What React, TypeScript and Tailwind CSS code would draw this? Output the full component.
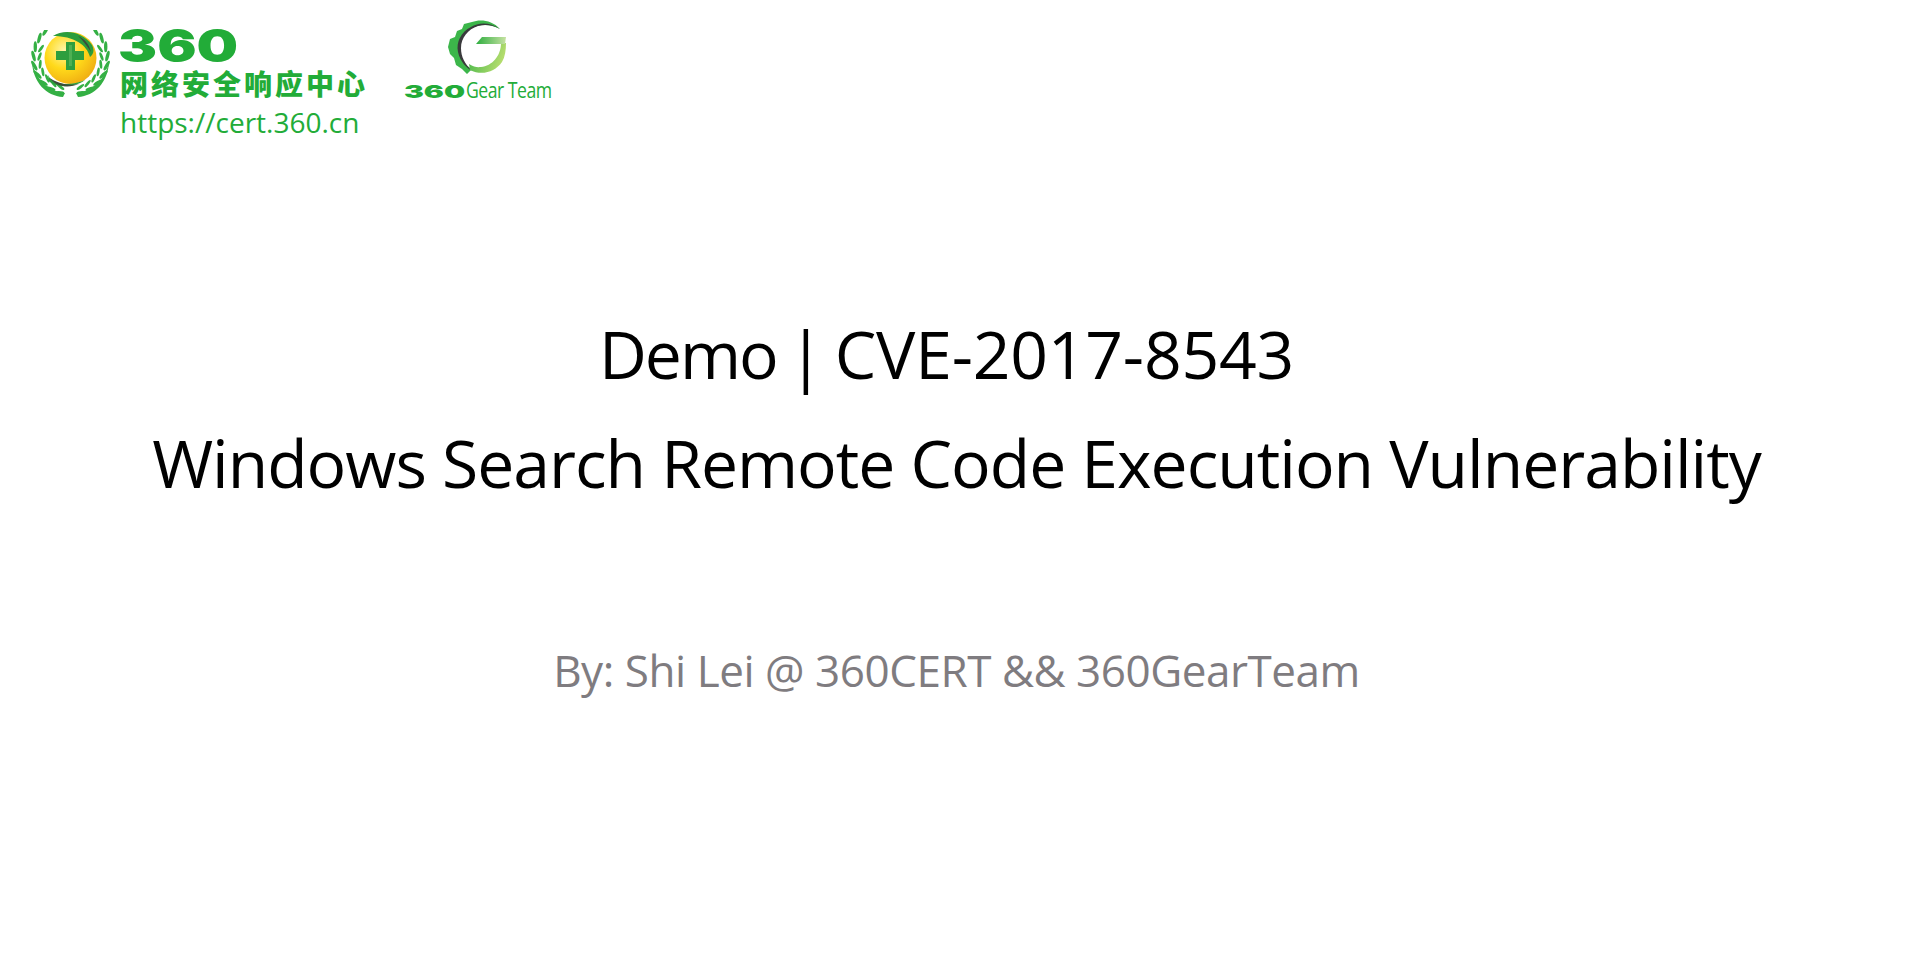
const OUTER = [0, 1, 2, 3, 4, 5, 6, 7, 8];

function CertEmblem() {
  return (
    <svg width="82" height="68" viewBox="0 0 82 68" className="shrink-0">
      <defs>
        <radialGradient id="ball" cx="0.38" cy="0.35" r="0.8">
          <stop offset="0" stopColor="#fff6a8" />
          <stop offset="0.45" stopColor="#ffd91a" />
          <stop offset="1" stopColor="#eba00f" />
        </radialGradient>
      </defs>
      {[false, true].map((flip) => (
        <g key={String(flip)} transform={flip ? "translate(81 0) scale(-1 1)" : undefined} fill="#34b044">
          <path d="M33 67 C16 66 3 52 2 32 C6 50 18 61 35 63Z" />
          {OUTER.map((i) => {
            const deg = 228 - i * 15;
            const rad = (deg * Math.PI) / 180;
            const xo = 40 + 36.500 * Math.cos(rad);
            const yo = 28 + 36.500 * Math.sin(rad);
            const xi = 40 + 30.500 * Math.cos(rad);
            const yi = 28 + 30.500 * Math.sin(rad);
            return (
              <g key={i}>
                <ellipse cx={xo} cy={yo} rx="1.700" ry="5.500" transform={`rotate(${deg - 180 - 18} ${xo} ${yo})`} />
                {i > 1 && <ellipse cx={xi} cy={yi} rx="1.400" ry="4.500" transform={`rotate(${deg - 180 + 18} ${xi} ${yi})`} />}
              </g>
            );
          })}
        </g>
      ))}
      <circle cx="40.500" cy="28" r="26" fill="url(#ball)" />
      <path d="M23 6 C34 -1 52 1 62 15 C65 21 63 25 60 27 C57 15 44 6 23 6Z" fill="#2c9d3c" />
      <path d="M48 6 C55 9 59 14 61 22 C56 15 53 10 48 6Z" fill="#3b4a3a" />
      <path d="M18 45 C23 56 41 56 55 50 C45 58 25 58 19 51Z" fill="#2c9d3c" />
      <path d="M20 48 C27 53 37 56 49 54 C37 59 25 56 20 48Z" fill="#3b4a3a" />
      <path d="M36 12 H45 V21 H54 V30 H45 V40 H36 V30 H26 V21 H36Z" fill="#2e9e3e" />
      <path d="M39 15 H42 V36 H39Z" fill="#5cb85c" opacity="0.7" />
    </svg>
  );
}

function GearMark() {
  return (
    <svg width="60" height="56" viewBox="0 0 60 56">
      <defs>
        <linearGradient id="gTop" x1="0" y1="0" x2="1" y2="0.3">
          <stop offset="0" stopColor="#3fb548" />
          <stop offset="1" stopColor="#b6dd6e" />
        </linearGradient>
        <linearGradient id="gBar" x1="0" y1="0" x2="1" y2="0">
          <stop offset="0" stopColor="#2ead3f" />
          <stop offset="1" stopColor="#c6e2a2" />
        </linearGradient>
      </defs>
      <path d="M2 19 L7 17 L9 11 L14 9 L16 4 L24 2 C32 -1 44 0 52 9 C42 4 32 4 24 8 C15 12 11 20 11 28 C11 37 16 45 24 49 L19 54 L14 49 L8 45 L6 38 L2 34 L0 27Z" fill="#3cb64a" />
      <path d="M52 9 C42 2 31 2 23 7 C13 12 8 22 10 32 C12 42 19 48 24 51 C17 44 13 37 13 28 C13 18 20 9 30 6 C38 4 45 5 52 9Z" fill="#3a3a3c" />
      <path d="M22 50 C34 56 47 52 54 42 C57 37 58 30 58 23 L53 23 C53 36 44 46 33 47 C29 47.500 26 47 21 44Z" fill="url(#gTop)" />
      <path d="M28 24 L34 17 H58 L57 24Z" fill="url(#gBar)" />
    </svg>
  );
}

export default function App() {
  return (
    <div className="min-h-[953px] bg-white font-['Open_Sans','Noto_Sans_CJK_SC',sans-serif]">
      <header className="flex items-start pl-[30px] pt-[20px]">
        <div className="mt-[10px]">
          <CertEmblem />
        </div>
        <div className="ml-[8px] w-[260px] text-[#22ac38]">
          <div className="mt-[7px] -ml-[2px] h-[38px] origin-left scale-x-[1.3] font-['Inter',sans-serif] text-[45px] leading-[38px] font-black">360</div>
          <div className="mt-[3px] h-[32px] text-[28px] leading-[32px] font-black tracking-[3px] whitespace-nowrap">网络安全响应中心</div>
          <div className="mt-[4px] text-[28px] leading-[36px] whitespace-nowrap">https://cert.360.cn</div>
        </div>
        <div className="ml-[24px] flex flex-col text-[#22ac38]">
          <div className="ml-[44px]">
            <GearMark />
          </div>
          <div className="mt-[3px] flex items-baseline whitespace-nowrap">
            <span className="w-[62px] origin-left scale-x-[1.65] font-['Inter',sans-serif] text-[18px] leading-[22px] font-black">360</span>
            <span className="origin-left scale-x-[0.84] text-[21px] leading-[22px] tracking-[-0.6px]">Gear Team</span>
          </div>
        </div>
      </header>

      <main className="flex flex-col items-center pr-[7px] text-black">
        <h1 className="mt-[159px] pr-[20px] text-[66px] leading-[109px] tracking-[-0.2px] [word-spacing:-6px] whitespace-nowrap">
          <span className="tracking-[-2px]">Demo</span> | CVE-2017-8543
        </h1>
        <h1 className="text-[66px] leading-[109px] tracking-[-1px] whitespace-nowrap">Windows Search Remote Code Execution Vulnerability</h1>
        <p className="mt-[123px] text-[44px] leading-[60px] tracking-[-0.45px] text-[#7f7c80] whitespace-nowrap">By: Shi Lei @ 360CERT &amp;&amp; 360GearTeam</p>
      </main>
    </div>
  );
}
